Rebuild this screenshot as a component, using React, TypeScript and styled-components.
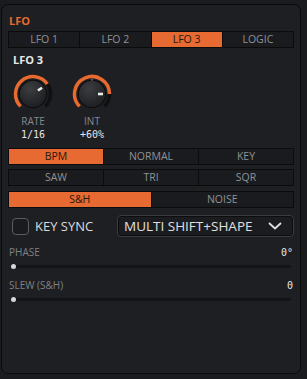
import React from "react";
import styled, { createGlobalStyle } from "styled-components";

const Global = createGlobalStyle`
  html, body { margin: 0; padding: 0; background: #1a1b1e; }
  body { font-family: "Open Sans", "DejaVu Sans", sans-serif; }
  * { box-sizing: border-box; }
`;

const ORANGE = "#e66a31";

const Page = styled.div`
  width: 307px;
  height: 379px;
  padding: 4px 6px 0 1px;
`;

const Panel = styled.div`
  width: 300px;
  height: 370px;
  background: #1e1f22;
  border: 1px solid #0a0a0b;
  border-radius: 7px;
  padding: 9px 6px 0 6px;
  display: flex;
  flex-direction: column;
`;

const Title = styled.div`
  color: ${ORANGE};
  font-size: 11px;
  font-weight: 700;
  line-height: 13px;
  padding-left: 1px;
`;

const Seg = styled.div<{ $cols: number; $mt: number }>`
  display: grid;
  grid-template-columns: repeat(${(p) => p.$cols}, 1fr);
  gap: 1px;
  background: #0b0b0c;
  padding: 1px;
  margin-top: ${(p) => p.$mt}px;
  height: 17px;
`;

const SegItem = styled.div<{ $active?: boolean }>`
  background: ${(p) => (p.$active ? ORANGE : "#1a1b1e")};
  color: ${(p) => (p.$active ? "#2a170d" : "#8f9297")};
  font-size: 10.5px;
  line-height: 15px;
  text-align: center;
`;

const Heading = styled.div`
  color: #e8e8e8;
  font-size: 11px;
  font-weight: 700;
  line-height: 13px;
  margin: 5px 0 0 5px;
`;

const KnobRow = styled.div`
  display: flex;
  gap: 9px;
  margin-top: 8px;
`;

const KnobCol = styled.div`
  width: 50px;
  display: flex;
  flex-direction: column;
  align-items: center;
`;

const KnobLabel = styled.div`
  color: #85888d;
  font-size: 10px;
  line-height: 12px;
  margin-top: 1px;
`;

const KnobValue = styled.div`
  color: #e6e6e6;
  font-family: "DejaVu Sans Mono", monospace;
  font-size: 10px;
  line-height: 13px;
  margin-top: 1px;
`;

const CheckRow = styled.div`
  display: flex;
  align-items: center;
  margin-top: 7px;
  padding-left: 4px;
`;

const Check = styled.div`
  width: 17px;
  height: 17px;
  border: 1.5px solid #5a5c60;
  border-radius: 4px;
  background: #1a1b1e;
`;

const CheckText = styled.div`
  color: #dcdcdc;
  font-size: 13px;
  font-weight: 500;
  line-height: 16px;
  margin-left: 6px;
  width: 82px;
`;

const Dropdown = styled.div`
  flex: 1;
  height: 22px;
  border: 1px solid #3a3b3f;
  border-radius: 4px;
  background: #1b1c1f;
  box-shadow: inset 0 0 0 1px #0d0d0e;
  display: flex;
  align-items: center;
  padding: 0 11px 0 6px;
  justify-content: space-between;
  color: #e0e0e0;
  font-size: 13.5px;
  font-weight: 500;
`;

const ParamHead = styled.div<{ $mt: number }>`
  display: flex;
  justify-content: space-between;
  align-items: baseline;
  margin-top: ${(p) => p.$mt}px;
  padding: 0 1px 0 1px;
`;

const ParamLabel = styled.div`
  color: #7e8186;
  font-size: 10px;
  line-height: 12px;
`;

const ParamValue = styled.div`
  color: #e6e6e6;
  font-family: "DejaVu Sans Mono", monospace;
  font-size: 10px;
  line-height: 12px;
`;

const Track = styled.div`
  position: relative;
  height: 3px;
  margin: 6px 3px 0 4px;
  background: #131416;
  border-radius: 2px;
`;

const Thumb = styled.div`
  position: absolute;
  left: -1px;
  top: -1px;
  width: 5px;
  height: 5px;
  border-radius: 50%;
  background: #d6d6d6;
`;

const polar = (cx: number, cy: number, r: number, deg: number) => {
  const a = ((deg - 90) * Math.PI) / 180;
  return [cx + r * Math.cos(a), cy + r * Math.sin(a)];
};

const arc = (cx: number, cy: number, r: number, a0: number, a1: number) => {
  const [x0, y0] = polar(cx, cy, r, a0);
  const [x1, y1] = polar(cx, cy, r, a1);
  const large = a1 - a0 > 180 ? 1 : 0;
  return `M ${x0} ${y0} A ${r} ${r} 0 ${large} 1 ${x1} ${y1}`;
};

const Knob: React.FC<{ angle: number; tick?: boolean; id: string }> = ({ angle, tick, id }) => {
  const c = 20;
  const [p0x, p0y] = polar(c, c, 6, angle);
  const [p1x, p1y] = polar(c, c, 11, angle);
  return (
    <svg width="40" height="40" viewBox="0 0 40 40">
      <defs>
        <radialGradient id={id} cx="40%" cy="30%" r="75%">
          <stop offset="0%" stopColor="#3c3d41" />
          <stop offset="100%" stopColor="#1c1d1f" />
        </radialGradient>
      </defs>
      <path d={arc(c, c, 17.5, -135, 135)} stroke="#0f1011" strokeWidth="3.5" fill="none" />
      <path d={arc(c, c, 17.5, -135, angle)} stroke={ORANGE} strokeWidth="3.5" fill="none" />
      <circle cx={c} cy={c} r="14.2" fill="#0c0c0d" />
      <circle cx={c} cy={c} r="13.2" fill={`url(#${id})`} />
      {tick && <circle cx={c} cy={c - 14.2} r="0.9" fill="#777" />}
      <line x1={p0x} y1={p0y} x2={p1x} y2={p1y} stroke="#ececec" strokeWidth="2.6" strokeLinecap="butt" />
    </svg>
  );
};

const Chevron = () => (
  <svg width="14" height="8" viewBox="0 0 14 8">
    <path d="M1 1 L7 6.5 L13 1" stroke="#e0e0e0" strokeWidth="1.8" fill="none" />
  </svg>
);

export default function App() {
  return (
    <>
      <Global />
      <Page>
        <Panel>
          <Title>LFO</Title>
          <Seg $cols={4} $mt={4}>
            <SegItem>LFO 1</SegItem>
            <SegItem>LFO 2</SegItem>
            <SegItem $active>LFO 3</SegItem>
            <SegItem>LOGIC</SegItem>
          </Seg>
          <Heading>LFO 3</Heading>
          <KnobRow>
            <KnobCol>
              <Knob id="g1" angle={55} />
              <KnobLabel>RATE</KnobLabel>
              <KnobValue>1/16</KnobValue>
            </KnobCol>
            <KnobCol>
              <Knob id="g2" angle={90} tick />
              <KnobLabel>INT</KnobLabel>
              <KnobValue>+60%</KnobValue>
            </KnobCol>
          </KnobRow>
          <Seg $cols={3} $mt={7}>
            <SegItem $active>BPM</SegItem>
            <SegItem>NORMAL</SegItem>
            <SegItem>KEY</SegItem>
          </Seg>
          <Seg $cols={3} $mt={4}>
            <SegItem>SAW</SegItem>
            <SegItem>TRI</SegItem>
            <SegItem>SQR</SegItem>
          </Seg>
          <Seg $cols={2} $mt={5}>
            <SegItem $active>S&amp;H</SegItem>
            <SegItem>NOISE</SegItem>
          </Seg>
          <CheckRow>
            <Check />
            <CheckText>KEY SYNC</CheckText>
            <Dropdown>
              <span>MULTI SHIFT+SHAPE</span>
              <Chevron />
            </Dropdown>
          </CheckRow>
          <ParamHead $mt={9}>
            <ParamLabel>PHASE</ParamLabel>
            <ParamValue>0°</ParamValue>
          </ParamHead>
          <Track>
            <Thumb />
          </Track>
          <ParamHead $mt={11}>
            <ParamLabel>SLEW (S&amp;H)</ParamLabel>
            <ParamValue>0</ParamValue>
          </ParamHead>
          <Track>
            <Thumb />
          </Track>
        </Panel>
      </Page>
    </>
  );
}
